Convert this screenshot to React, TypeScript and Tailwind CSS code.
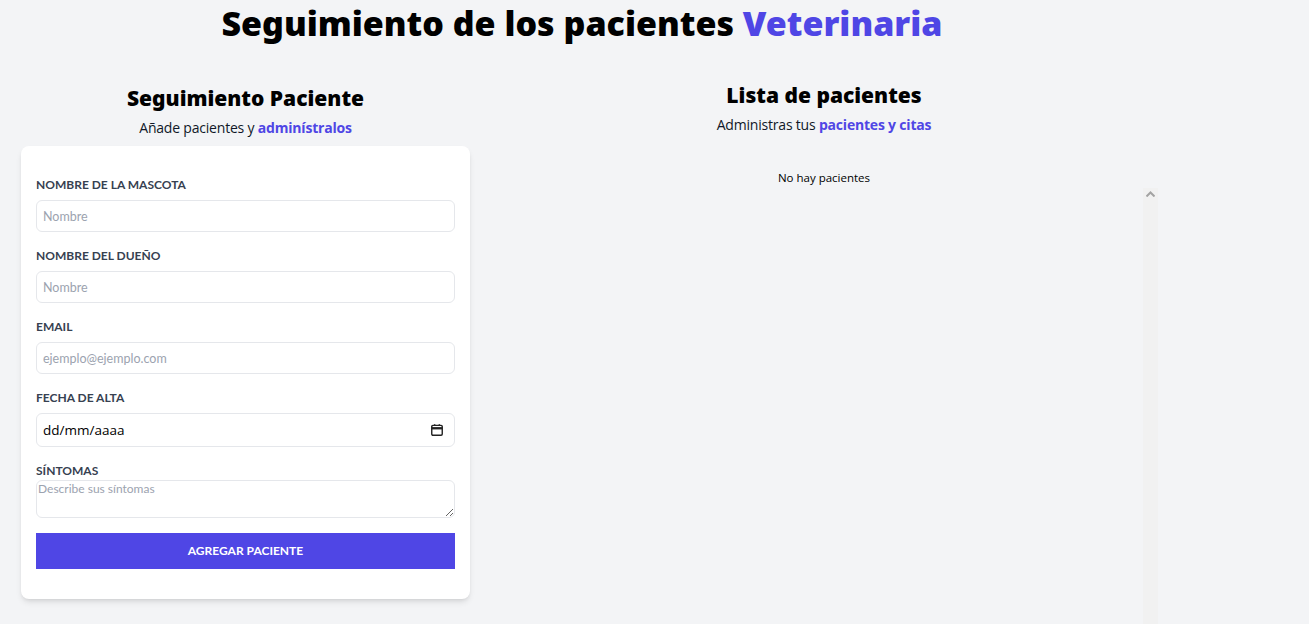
import { useState } from "react";

const labelCls = "block text-[12px] font-bold uppercase leading-[18px] text-[#374151]";
const inputCls =
  "mt-1.5 block w-full rounded-md border border-[#e5e7eb] bg-white px-[6px] text-[12.5px] text-[#374151] placeholder-[#9ca3af] outline-none";

function Formulario() {
  const [mascota, setMascota] = useState("");
  const [propietario, setPropietario] = useState("");
  const [email, setEmail] = useState("");
  const [sintomas, setSintomas] = useState("");

  return (
    <div className="ml-[21px] w-[449px]">
      <h2 className="mt-[3px] text-center font-['Noto_Sans',sans-serif] text-[21px] font-black leading-7 text-black">Seguimiento Paciente</h2>
      <p className="mt-[5px] text-center font-['Open_Sans',sans-serif] text-[14px] leading-[22px] tracking-[-0.2px] text-gray-900">
        Añade pacientes y <span className="font-bold text-[#4f46e5]">adminístralos</span>
      </p>
      <form className="mt-[7px] rounded-lg bg-white px-[15px] pb-[30px] pt-[30px] shadow-md font-['Lato',sans-serif]">
        <div className="mb-[15px]">
          <label className={labelCls}>Nombre de la mascota</label>
          <input className={`${inputCls} h-8`} placeholder="Nombre" value={mascota} onChange={(e) => setMascota(e.target.value)} />
        </div>
        <div className="mb-[15px]">
          <label className={labelCls}>Nombre del dueño</label>
          <input className={`${inputCls} h-8`} placeholder="Nombre" value={propietario} onChange={(e) => setPropietario(e.target.value)} />
        </div>
        <div className="mb-[15px]">
          <label className={labelCls}>Email</label>
          <input className={`${inputCls} h-8`} placeholder="ejemplo@ejemplo.com" value={email} onChange={(e) => setEmail(e.target.value)} />
        </div>
        <div className="mb-[15px]">
          <label className={labelCls}>Fecha de alta</label>
          <div className={`${inputCls} flex h-[34px] items-center justify-between pr-2.5`}>
            <span className="font-['Open_Sans',sans-serif] text-[13.5px] text-black">dd/mm/aaaa</span>
            <svg width="14" height="14" viewBox="0 0 24 24" fill="none" stroke="#222" strokeWidth="2.4">
              <rect x="3" y="4" width="18" height="17" rx="2" />
              <path d="M3 9h18" strokeWidth="4" />
              <path d="M8 2v3M16 2v3" />
            </svg>
          </div>
        </div>
        <div className="mb-[15px]">
          <label className={labelCls}>Síntomas</label>
          <textarea
            className="block h-[38px] w-full rounded-md border border-[#e5e7eb] bg-white px-px text-[12px] leading-4 text-[#374151] placeholder-[#9ca3af] outline-none"
            placeholder="Describe sus síntomas"
            value={sintomas}
            onChange={(e) => setSintomas(e.target.value)}
          />
        </div>
        <button type="button" className="block h-9 w-full bg-[#4f46e5] text-[12px] font-bold uppercase text-white">
          Agregar paciente
        </button>
      </form>
    </div>
  );
}

function ListadoPacientes() {
  return (
    <div className="ml-5 flex w-[668px] flex-col">
      <h2 className="text-center font-['Noto_Sans',sans-serif] text-[21px] font-black leading-7 text-black">Lista de pacientes</h2>
      <p className="mt-[5px] text-center font-['Open_Sans',sans-serif] text-[14px] leading-[22px] tracking-[-0.2px] text-gray-900">
        Administras tus <span className="font-bold text-[#4f46e5]">pacientes y citas</span>
      </p>
      <p className="mt-[34px] text-center font-['Open_Sans',sans-serif] text-[11.5px] leading-4 text-black">No hay pacientes</p>
      <div className="mt-[2px] flex h-[460px]">
        <div className="flex-1" />
        <div className="flex w-[15px] justify-center bg-[#f1f1f1] pt-[3px]">
          <svg width="9" height="6" viewBox="0 0 9 6">
            <path d="M0.5 5.5 L4.5 1.5 L8.5 5.5" fill="none" stroke="#a3a3a3" strokeWidth="2" />
          </svg>
        </div>
      </div>
    </div>
  );
}

export default function App() {
  return (
    <div className="h-screen overflow-hidden bg-[#f3f4f6] font-['Lato',sans-serif]">
      <div className="w-[1164px]">
        <h1 className="text-center font-['Noto_Sans',sans-serif] text-[34px] font-black leading-[46px] text-black">
          Seguimiento de los pacientes <span className="text-[#4f46e5]">Veterinaria</span>
        </h1>
        <div className="mt-[35px] flex">
          <Formulario />
          <ListadoPacientes />
        </div>
      </div>
    </div>
  );
}
